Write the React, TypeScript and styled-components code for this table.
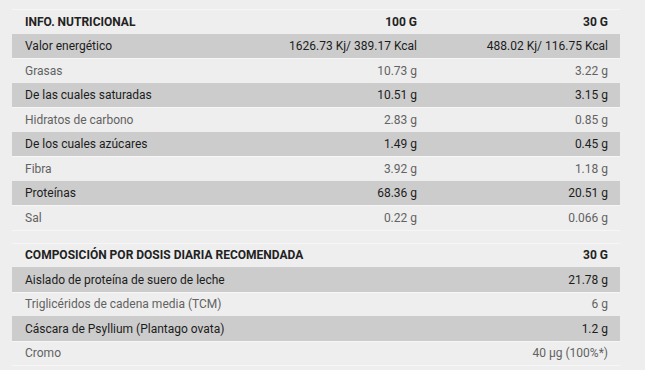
import styled, { createGlobalStyle } from 'styled-components';

const GlobalStyle = createGlobalStyle`
    html, body {
        margin: 0;
        padding: 0;
        background: #eeeeee;
    }
    body {
        font-family: Roboto, 'Liberation Sans', Arial, sans-serif;
    }
`;

const Page = styled.div`
    width: 608px;
    padding: 9px 0 0 12px;
`;

const Table = styled.table`
    width: 100%;
    border-collapse: collapse;
    table-layout: fixed;
    margin-bottom: 12px;
    font-size: 12px;
    col.label {
        width: 226px;
    }
`;

const Row = styled.tr<{ $shaded?: boolean }>`
    height: 24.5px;
    background: ${(p) => (p.$shaded ? '#cccccc' : 'transparent')};
    color: ${(p) => (p.$shaded ? '#1c1c1c' : '#626262')};
    border-top: 1px solid ${(p) => (p.$shaded ? '#cccccc' : '#f6f6f6')};
    &:last-child {
        border-bottom: 1px solid #f6f6f6;
    }
    td {
        padding: 0 12px 0 13px;
        white-space: nowrap;
    }
    td + td {
        text-align: right;
    }
`;

const HeadRow = styled.tr`
    height: 24.5px;
    border-top: 1px solid #f6f6f6;
    color: #222222;
    th {
        font-size: 12px;
        font-weight: 700;
        text-transform: uppercase;
        text-align: left;
        padding: 0 12px 0 13px;
        white-space: nowrap;
    }
    th + th {
        text-align: right;
    }
`;

const nutrition = [
    ['Valor energético', '1626.73 Kj/ 389.17 Kcal', '488.02 Kj/ 116.75 Kcal'],
    ['Grasas', '10.73 g', '3.22 g'],
    ['De las cuales saturadas', '10.51 g', '3.15 g'],
    ['Hidratos de carbono', '2.83 g', '0.85 g'],
    ['De los cuales azúcares', '1.49 g', '0.45 g'],
    ['Fibra', '3.92 g', '1.18 g'],
    ['Proteínas', '68.36 g', '20.51 g'],
    ['Sal', '0.22 g', '0.066 g'],
];

const composition = [
    ['Aislado de proteína de suero de leche', '21.78 g'],
    ['Triglicéridos de cadena media (TCM)', '6 g'],
    ['Cáscara de Psyllium (Plantago ovata)', '1.2 g'],
    ['Cromo', '40 µg (100%*)'],
];

const App = () => {
    return (
        <>
            <GlobalStyle />
            <Page>
                <Table>
                    <colgroup>
                        <col className="label" />
                        <col />
                        <col />
                    </colgroup>
                    <thead>
                        <HeadRow>
                            <th>Info. nutricional</th>
                            <th>100 g</th>
                            <th>30 g</th>
                        </HeadRow>
                    </thead>
                    <tbody>
                        {nutrition.map(([name, a, b], i) => (
                            <Row key={name} $shaded={i % 2 === 0}>
                                <td>{name}</td>
                                <td>{a}</td>
                                <td>{b}</td>
                            </Row>
                        ))}
                    </tbody>
                </Table>
                <Table>
                    <thead>
                        <HeadRow>
                            <th>Composición por dosis diaria recomendada</th>
                            <th>30 g</th>
                        </HeadRow>
                    </thead>
                    <tbody>
                        {composition.map(([name, v], i) => (
                            <Row key={name} $shaded={i % 2 === 0}>
                                <td>{name}</td>
                                <td>{v}</td>
                            </Row>
                        ))}
                    </tbody>
                </Table>
            </Page>
        </>
    );
};

export default App;
